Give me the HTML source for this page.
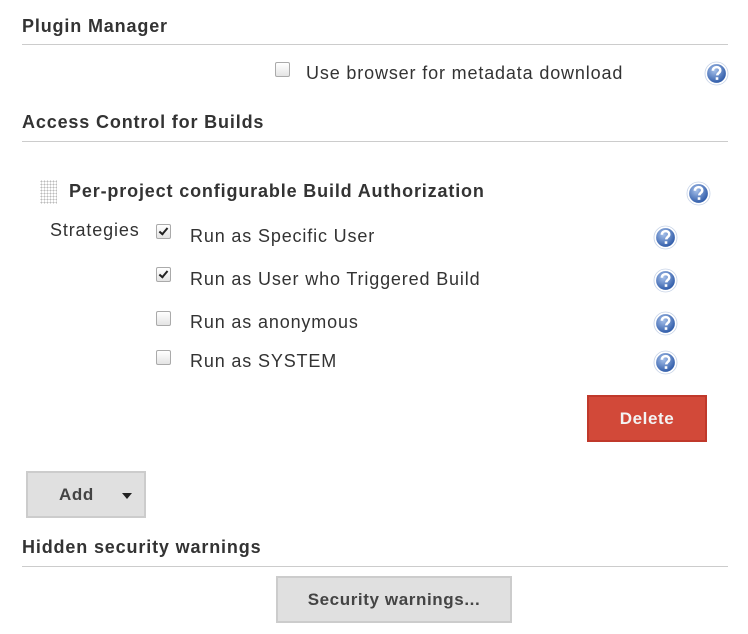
<!DOCTYPE html>
<html><head><style>
body{margin:0;width:748px;height:634px;background:#fff;font-family:"Liberation Sans",Arial,sans-serif;color:#333;position:relative;overflow:hidden;letter-spacing:0.85px}
.a{position:absolute;white-space:nowrap}
.h{font-weight:bold;font-size:18px;color:#333}
.line{position:absolute;left:22px;width:706px;height:1px;background:#ccc}
.t{font-size:18px;color:#333}
.cb{position:absolute;width:13px;height:13px;border:1px solid #aaa;border-radius:2px;background:linear-gradient(#fff,#e4e4e4)}
.cb.c::after{content:"";position:absolute;left:4px;top:1px;width:3px;height:7px;border:solid #222;border-width:0 2px 2px 0;transform:rotate(40deg)}
.help{position:absolute;width:25px;height:25px}
.btn{position:absolute;background:#e0e0e0;border:2px solid #ccc;box-sizing:border-box;font-weight:bold;font-size:17px;color:#444;text-align:center;letter-spacing:0.6px}
</style></head><body>
<svg width="0" height="0" style="position:absolute"><defs>
<radialGradient id="g" cx="40%" cy="35%" r="65%"><stop offset="0" stop-color="#a6c0ea"/><stop offset="1" stop-color="#2a57a6"/></radialGradient>
<symbol id="q" viewBox="0 0 22 22"><circle cx="11" cy="11" r="10.5" fill="#c8d4e8"/><circle cx="11" cy="11" r="9" fill="url(#g)" stroke="#fff" stroke-width="1.5"/><path d="M7.8 8.6c0-2 1.5-3.2 3.3-3.2s3.2 1.1 3.2 2.8c0 2.3-2.6 2.3-2.6 4.5" fill="none" stroke="#fff" stroke-width="2.2"/><rect x="10.3" y="14.3" width="2.3" height="2.3" fill="#fff"/></symbol>
</defs></svg>

<div class="a h" style="left:22px;top:16px">Plugin Manager</div>
<div class="line" style="top:44px"></div>
<div class="cb" style="left:275px;top:62px"></div>
<div class="a t" style="left:306px;top:63px">Use browser for metadata download</div>
<svg class="help" style="left:704px;top:61px"><use href="#q"/></svg>

<div class="a h" style="left:22px;top:112px">Access Control for Builds</div>
<div class="line" style="top:141px"></div>

<div class="a" style="left:40px;top:180px;width:17px;height:24px;background-image:radial-gradient(#bbb 0.8px,transparent 1px);background-size:3px 3px"></div>
<div class="a h" style="left:69px;top:181px">Per-project configurable Build Authorization</div>
<svg class="help" style="left:686px;top:181px"><use href="#q"/></svg>

<div class="a t" style="left:50px;top:220px">Strategies</div>
<div class="cb c" style="left:156px;top:224px"></div>
<div class="a t" style="left:190px;top:226px">Run as Specific User</div>
<svg class="help" style="left:653px;top:225px"><use href="#q"/></svg>
<div class="cb c" style="left:156px;top:267px"></div>
<div class="a t" style="left:190px;top:269px">Run as User who Triggered Build</div>
<svg class="help" style="left:653px;top:268px"><use href="#q"/></svg>
<div class="cb" style="left:156px;top:311px"></div>
<div class="a t" style="left:190px;top:312px">Run as anonymous</div>
<svg class="help" style="left:653px;top:311px"><use href="#q"/></svg>
<div class="cb" style="left:156px;top:350px"></div>
<div class="a t" style="left:190px;top:351px">Run as SYSTEM</div>
<svg class="help" style="left:653px;top:350px"><use href="#q"/></svg>

<div class="btn" style="left:587px;top:395px;width:120px;height:47px;background:#d24939;border-color:#c0392b;color:#f3f3f3;line-height:43px">Delete</div>

<div class="btn" style="left:26px;top:471px;width:120px;height:47px;line-height:43px"><span style="position:absolute;left:31px">Add</span><span style="position:absolute;left:94px;top:20px;width:0;height:0;border-left:5px solid transparent;border-right:5px solid transparent;border-top:6px solid #222"></span></div>

<div class="a h" style="left:22px;top:537px">Hidden security warnings</div>
<div class="line" style="top:566px"></div>
<div class="btn" style="left:276px;top:576px;width:236px;height:47px;line-height:43px">Security warnings...</div>
</body></html>
